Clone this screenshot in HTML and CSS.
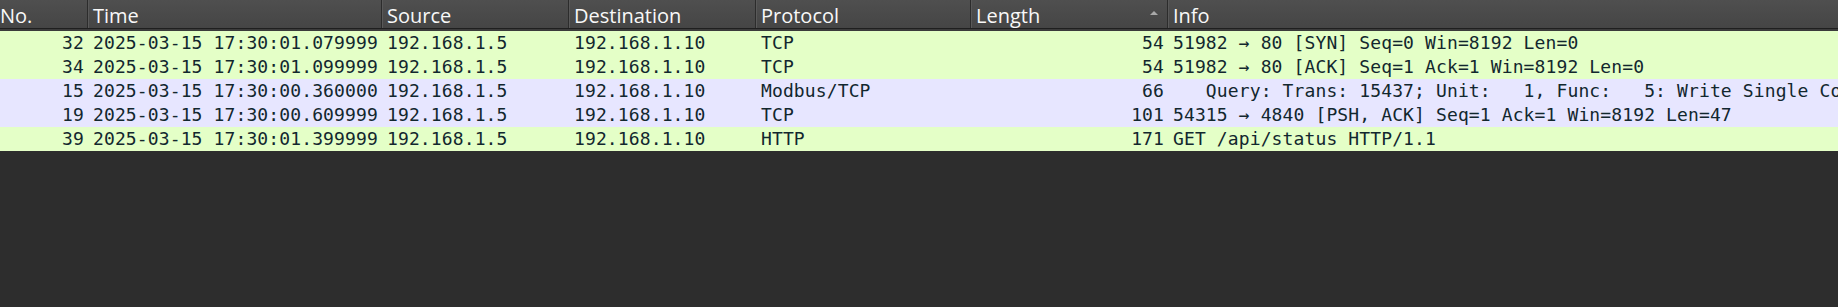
FILE: index.html
```html
<!DOCTYPE html>
<html>
<head>
<meta charset="utf-8">
<link rel="stylesheet" href="styles.css">
</head>
<body>
<div class="packet-list">
  <div class="header">
    <div class="hcell col-no">No.</div>
    <div class="hcell">Time</div>
    <div class="hcell">Source</div>
    <div class="hcell">Destination</div>
    <div class="hcell">Protocol</div>
    <div class="hcell sorted">Length<span class="sort-arrow"></span></div>
    <div class="hcell last">Info</div>
  </div>
  <div class="row green">
    <div class="cell num">32</div><div class="cell">2025-03-15 17:30:01.079999</div><div class="cell">192.168.1.5</div><div class="cell">192.168.1.10</div><div class="cell">TCP</div><div class="cell num">54</div><div class="cell info">51982 → 80 [SYN] Seq=0 Win=8192 Len=0</div>
  </div>
  <div class="row green">
    <div class="cell num">34</div><div class="cell">2025-03-15 17:30:01.099999</div><div class="cell">192.168.1.5</div><div class="cell">192.168.1.10</div><div class="cell">TCP</div><div class="cell num">54</div><div class="cell info">51982 → 80 [ACK] Seq=1 Ack=1 Win=8192 Len=0</div>
  </div>
  <div class="row lavender">
    <div class="cell num">15</div><div class="cell">2025-03-15 17:30:00.360000</div><div class="cell">192.168.1.5</div><div class="cell">192.168.1.10</div><div class="cell">Modbus/TCP</div><div class="cell num">66</div><div class="cell info">   Query: Trans: 15437; Unit:   1, Func:   5: Write Single Coil</div>
  </div>
  <div class="row lavender">
    <div class="cell num">19</div><div class="cell">2025-03-15 17:30:00.609999</div><div class="cell">192.168.1.5</div><div class="cell">192.168.1.10</div><div class="cell">TCP</div><div class="cell num">101</div><div class="cell info">54315 → 4840 [PSH, ACK] Seq=1 Ack=1 Win=8192 Len=47</div>
  </div>
  <div class="row green">
    <div class="cell num">39</div><div class="cell">2025-03-15 17:30:01.399999</div><div class="cell">192.168.1.5</div><div class="cell">192.168.1.10</div><div class="cell">HTTP</div><div class="cell num">171</div><div class="cell info">GET /api/status HTTP/1.1</div>
  </div>
</div>
</body>
</html>
```
FILE: styles.css
```css
html, body {
  margin: 0;
  padding: 0;
  background: #2d2d2d;
}

.packet-list {
  width: 1838px;
  height: 307px;
  overflow: hidden;
  background: #2d2d2d;
}

.header,
.row {
  display: grid;
  grid-template-columns: 88px 294px 187px 187px 215px 197px 1fr;
}

.header {
  height: 28px;
  background: linear-gradient(#4f4f4f, #454545);
  border-bottom: 1px solid #1f1f1f;
  box-shadow: 0 1px 0 #3b3b3b, 0 2px 0 #3b3b3b;
  margin-bottom: 2px;
}

.hcell {
  box-sizing: border-box;
  display: flex;
  align-items: center;
  padding: 2px 4px 0 4px;
  font-family: "Open Sans", "Noto Sans", sans-serif;
  font-size: 20px;
  color: #f8f8f8;
  border-right: 1px solid #2c2c2c;
  border-left: 1px solid #595959;
  white-space: nowrap;
  overflow: hidden;
}

.hcell.col-no {
  border-left: none;
  padding-left: 0;
}

.hcell.last {
  border-right: none;
}

.sort-arrow {
  margin-left: auto;
  margin-right: 5px;
  align-self: flex-start;
  margin-top: 9px;
  width: 0;
  height: 0;
  border-left: 4px solid transparent;
  border-right: 4px solid transparent;
  border-bottom: 4px solid #a9a9a9;
}

.row {
  height: 24px;
  color: #12272e;
  font-family: "DejaVu Sans Mono", monospace;
  font-size: 18px;
  letter-spacing: 0.12px;
}

.row.green {
  background: #e4ffc7;
}

.row.lavender {
  background: #e7e6ff;
}

.cell {
  box-sizing: border-box;
  padding: 0 4px 0 5px;
  line-height: 24px;
  white-space: pre;
  overflow: hidden;
}

.cell.num {
  text-align: right;
}

.cell.info {
  overflow: hidden;
}
```
